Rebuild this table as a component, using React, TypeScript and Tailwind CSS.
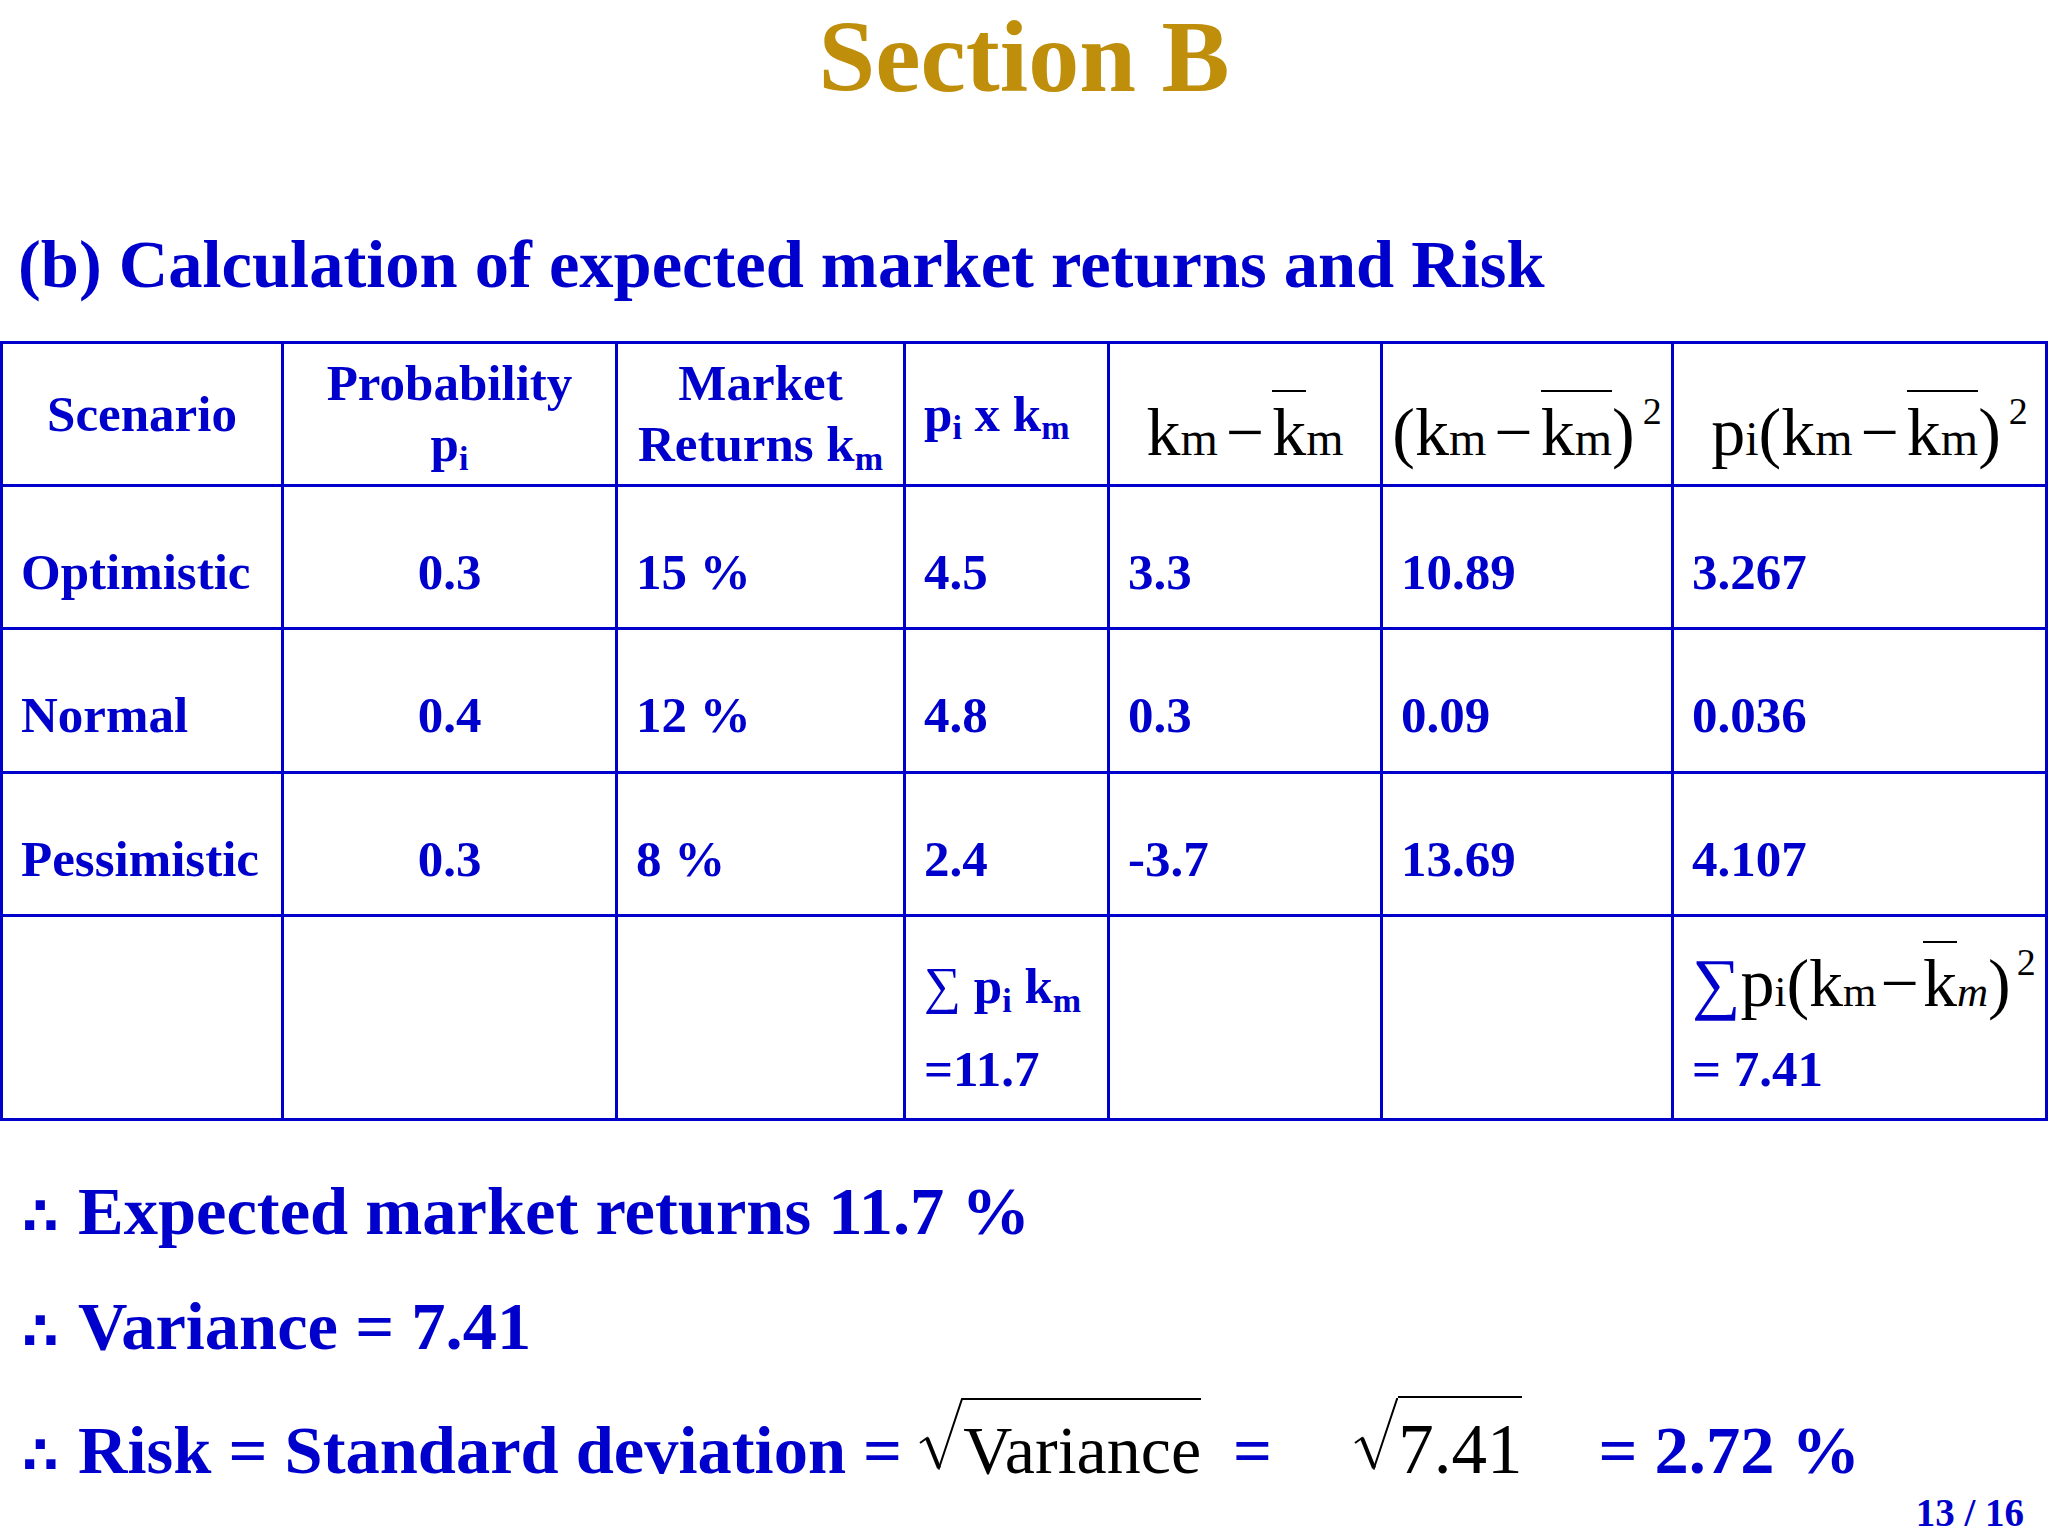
import React from "react";

const cellBase = "border-r-[3px] border-b-[3px] border-[#0000cc]";

function Cell({ className = "", children }: { className?: string; children?: React.ReactNode }) {
  return <div className={`${cellBase} ${className}`}>{children}</div>;
}

function Bar({ children }: { children: React.ReactNode }) {
  return <span className="inline-block border-t-[2px] border-black pt-[6px] leading-none">{children}</span>;
}

function Sm({ children, italic = false, small = false }: { children: React.ReactNode; italic?: boolean; small?: boolean }) {
  return <span className={`${small ? "text-[43px]" : "text-[48px]"} ${italic ? "italic" : ""}`}>{children}</span>;
}

function Sup2({ small = false }: { small?: boolean }) {
  return (
    <span className={`relative top-[-31px] text-[38px] ${small ? "ml-[6px]" : "ml-[8px]"}`}>2</span>
  );
}

function Minus({ small = false }: { small?: boolean }) {
  return <span className={small ? "mx-[4px]" : "mx-[8px]"}>−</span>;
}

function Radical() {
  return (
    <svg width="44" height="72" viewBox="0 0 44 72" className="inline-block align-[3px]">
      <path d="M1 45 L8 40 L20 70 L43 1 L44 1" fill="none" stroke="black" strokeWidth="2" />
      <path d="M8 40 L20 70" fill="none" stroke="black" strokeWidth="4" />
    </svg>
  );
}

function Therefore() {
  return (
    <span className="inline-block w-[56px] font-['DejaVu_Sans',sans-serif] text-[52px] leading-none">∴</span>
  );
}

const formula = "font-normal text-black text-[68px] leading-none whitespace-nowrap";
const dataCell = "pt-[60px] text-[51px] leading-none";
const bottomLine = "pl-[22px] text-[68.5px] leading-none whitespace-nowrap";

export default function App() {
  const rows = [
    ["Optimistic", "0.3", "15 %", "4.5", "3.3", "10.89", "3.267"],
    ["Normal", "0.4", "12 %", "4.8", "0.3", "0.09", "0.036"],
    ["Pessimistic", "0.3", "8 %", "2.4", "-3.7", "13.69", "4.107"],
  ];
  return (
    <div className="w-[2048px] h-[1536px] overflow-hidden bg-white font-['Liberation_Serif','DejaVu_Serif',serif] font-bold text-[#0000cc] flex flex-col">
      <div className="pt-[6px] text-center text-[102px] leading-none text-[#bf8e0b]">Section B</div>
      <div className="mt-[122px] pl-[18px] text-[68.5px] leading-[68px] whitespace-nowrap">
        (b) Calculation of expected market returns and Risk
      </div>

      <div className="mt-[43px] grid grid-cols-[281px_334px_288px_204px_273px_291px_374px] grid-rows-[143px_143px_144px_143px_204px] border-t-[3px] border-l-[3px] border-[#0000cc]">
        {/* header */}
        <Cell className="flex items-center justify-center text-[51px] leading-none">Scenario</Cell>
        <Cell className="flex flex-col items-center justify-center text-[51px] leading-[61px]">
          <div>Probability</div>
          <div>
            p<sub className="text-[34px]">i</sub>
          </div>
        </Cell>
        <Cell className="flex flex-col items-center justify-center text-[51px] leading-[61px]">
          <div>Market</div>
          <div className="whitespace-nowrap">
            Returns k<sub className="text-[34px]">m</sub>
          </div>
        </Cell>
        <Cell className="flex items-center pl-[18px] text-[51px] leading-none whitespace-nowrap">
          <span>
            p<sub className="text-[34px]">i</sub> x k<sub className="text-[34px]">m</sub>
          </span>
        </Cell>
        <Cell className="flex justify-center pt-[46px]">
          <div className={formula}>
            k<Sm>m</Sm>
            <Minus />
            <Bar>k</Bar>
            <Sm>m</Sm>
          </div>
        </Cell>
        <Cell className="flex justify-center pt-[46px]">
          <div className={formula}>
            (k<Sm>m</Sm>
            <Minus />
            <Bar>
              k<Sm>m</Sm>
            </Bar>
            )<Sup2 />
          </div>
        </Cell>
        <Cell className="flex justify-center pt-[46px] pl-[20px]">
          <div className={formula}>
            p<Sm>i</Sm>(k<Sm>m</Sm>
            <Minus />
            <Bar>
              k<Sm>m</Sm>
            </Bar>
            )<Sup2 />
          </div>
        </Cell>

        {/* data rows */}
        {rows.map((r) => (
          <React.Fragment key={r[0]}>
            <Cell className={`${dataCell} pl-[18px]`}>{r[0]}</Cell>
            <Cell className={`${dataCell} text-center`}>{r[1]}</Cell>
            <Cell className={`${dataCell} pl-[18px]`}>{r[2]}</Cell>
            <Cell className={`${dataCell} pl-[18px]`}>{r[3]}</Cell>
            <Cell className={`${dataCell} pl-[18px]`}>{r[4]}</Cell>
            <Cell className={`${dataCell} pl-[18px]`}>{r[5]}</Cell>
            <Cell className={`${dataCell} pl-[18px]`}>{r[6]}</Cell>
          </React.Fragment>
        ))}

        {/* totals row */}
        <Cell />
        <Cell />
        <Cell />
        <Cell className="flex flex-col pt-[43px] pl-[18px] text-[51px] leading-none">
          <div className="h-[51px] whitespace-nowrap">
            <span className="font-normal text-[52px]">∑</span> p<sub className="text-[34px]">i</sub> k
            <sub className="text-[34px]">m</sub>
          </div>
          <div className="mt-[33px]">=11.7</div>
        </Cell>
        <Cell />
        <Cell />
        <Cell className="flex flex-col pt-[24px] pl-[18px]">
          <div className={`${formula} h-[76px] text-[66px]`}>
            <span className="text-[#0000cc]">∑</span>p<Sm small>i</Sm>(k<Sm small>m</Sm>
            <Minus small />
            <Bar>k</Bar>
            <Sm italic small>
              m
            </Sm>
            )<Sup2 small />
          </div>
          <div className="mt-[27px] text-[51px] leading-none">= 7.41</div>
        </Cell>
      </div>

      <div className={`mt-[56px] ${bottomLine}`}>
        <Therefore />
        Expected market returns 11.7 %
      </div>
      <div className={`mt-[46px] ${bottomLine}`}>
        <Therefore />
        Variance = 7.41
      </div>
      <div className={`mt-[36px] ${bottomLine}`}>
        <Therefore />
        {"Risk = Standard deviation = "}
        <Radical />
        <span className="inline-block border-t-[2px] border-black pt-[16px] text-[68px] font-normal text-black leading-none">
          Variance
        </span>
        <span className="ml-[32px]">=</span>
        <span className="ml-[82px]">
          <Radical />
          <span className="inline-block border-t-[2px] border-black pt-[16px] text-[71px] font-normal text-black leading-none">
            7.41
          </span>
        </span>
        <span className="ml-[76px]">= 2.72 %</span>
      </div>
      <div className="mt-auto mb-[1px] self-end pr-[24px] text-[39px] leading-[44px]">13 / 16</div>
    </div>
  );
}
